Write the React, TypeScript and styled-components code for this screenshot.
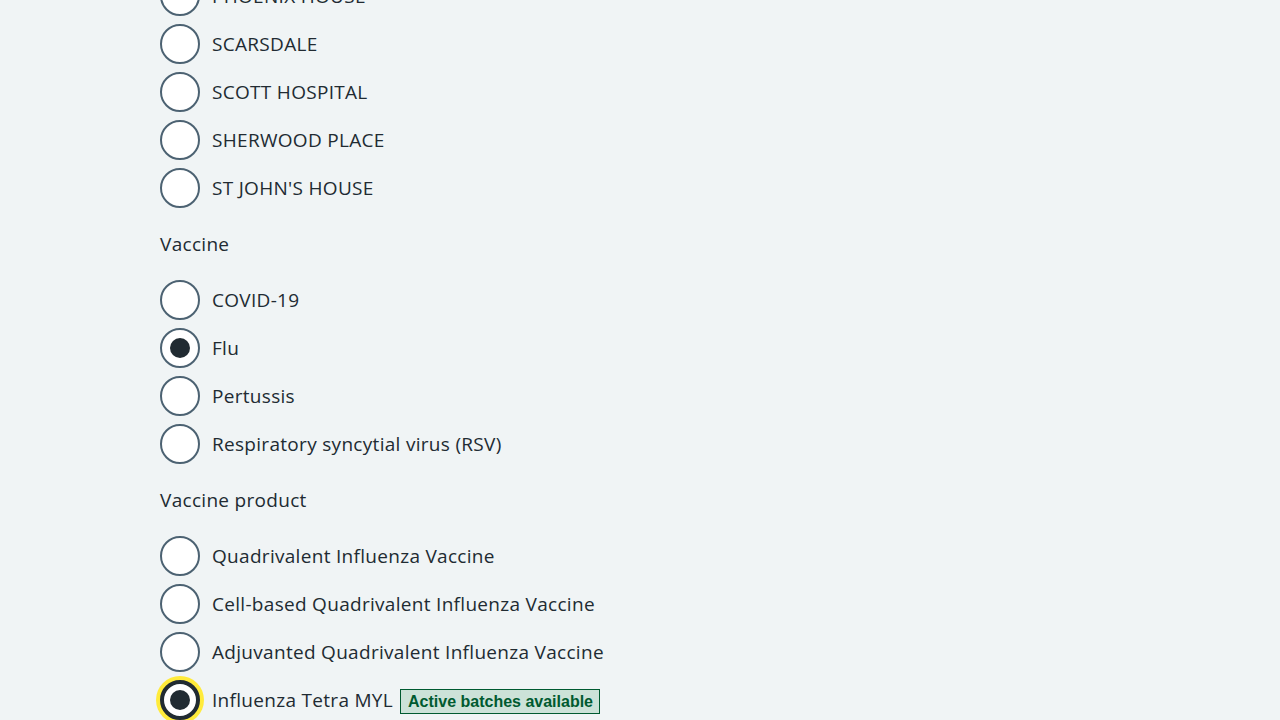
import { createGlobalStyle, styled } from "styled-components";

const GlobalStyle = createGlobalStyle`
  html, body {
    margin: 0;
    padding: 0;
    background: #f0f4f5;
    overflow: hidden;
  }
  body {
    font-family: "Open Sans", "Liberation Sans", Arial, sans-serif;
    color: #212b32;
  }
`;

type Option = { label: string; checked?: boolean; focused?: boolean; tag?: string };

const locations: Option[] = [
  { label: "PHOENIX HOUSE" },
  { label: "SCARSDALE" },
  { label: "SCOTT HOSPITAL" },
  { label: "SHERWOOD PLACE" },
  { label: "ST JOHN'S HOUSE" },
];

const vaccines: Option[] = [
  { label: "COVID-19" },
  { label: "Flu", checked: true },
  { label: "Pertussis" },
  { label: "Respiratory syncytial virus (RSV)" },
];

const products: Option[] = [
  { label: "Quadrivalent Influenza Vaccine" },
  { label: "Cell-based Quadrivalent Influenza Vaccine" },
  { label: "Adjuvanted Quadrivalent Influenza Vaccine" },
  { label: "Influenza Tetra MYL", checked: true, focused: true, tag: "Active batches available" },
];

const RadioGroup = ({ legend, options }: { legend?: string; options: Option[] }) => (
  <Fieldset>
    {legend && <Legend>{legend}</Legend>}
    <Radios>
      {options.map((o) => (
        <Item key={o.label}>
          <Circle $checked={o.checked} $focused={o.focused} />
          <Label>
            {o.label}
            {o.tag && <Tag>{o.tag}</Tag>}
          </Label>
        </Item>
      ))}
    </Radios>
  </Fieldset>
);

export default function App() {
  return (
    <>
      <GlobalStyle />
      <Page>
        <RadioGroup options={locations} />
        <RadioGroup legend="Vaccine" options={vaccines} />
        <RadioGroup legend="Vaccine product" options={products} />
      </Page>
    </>
  );
}

const Page = styled.main`
  display: flex;
  flex-direction: column;
  gap: 22px;
  margin-top: -24px;
  padding-left: 160px;
`;

const Fieldset = styled.fieldset`
  border: 0;
  margin: 0;
  padding: 0;
  display: flex;
  flex-direction: column;
  gap: 22px;
`;

const Legend = styled.div`
  font-size: 19px;
  line-height: 28px;
  height: 28px;
  letter-spacing: 0.3px;
`;

const Radios = styled.div`
  display: flex;
  flex-direction: column;
  gap: 8px;
`;

const Item = styled.div`
  display: flex;
  align-items: center;
  gap: 12px;
  height: 40px;
`;

const Circle = styled.span<{ $checked?: boolean; $focused?: boolean }>`
  box-sizing: border-box;
  width: 40px;
  height: 40px;
  flex-shrink: 0;
  border-radius: 50%;
  background: #ffffff;
  border: ${(p) => (p.$focused ? "4px solid #212b32" : "2px solid #4c6272")};
  box-shadow: ${(p) => (p.$focused ? "0 0 0 4px #ffeb3b" : "none")};
  display: flex;
  align-items: center;
  justify-content: center;

  &::after {
    content: "";
    display: ${(p) => (p.$checked ? "block" : "none")};
    width: 20px;
    height: 20px;
    border-radius: 50%;
    background: #212b32;
  }
`;

const Label = styled.span`
  font-size: 19px;
  line-height: 28px;
  letter-spacing: 0.3px;
  display: flex;
  align-items: center;
`;

const Tag = styled.span`
  margin-left: 7px;
  padding: 2px 6px 2px 7px;
  font-family: "Liberation Sans", Arial, sans-serif;
  font-size: 16px;
  line-height: 19px;
  letter-spacing: 0;
  font-weight: 700;
  color: #005a30;
  background: #cce2d8;
  border: 1px solid #005a30;
  margin-top: 2px;
`;
